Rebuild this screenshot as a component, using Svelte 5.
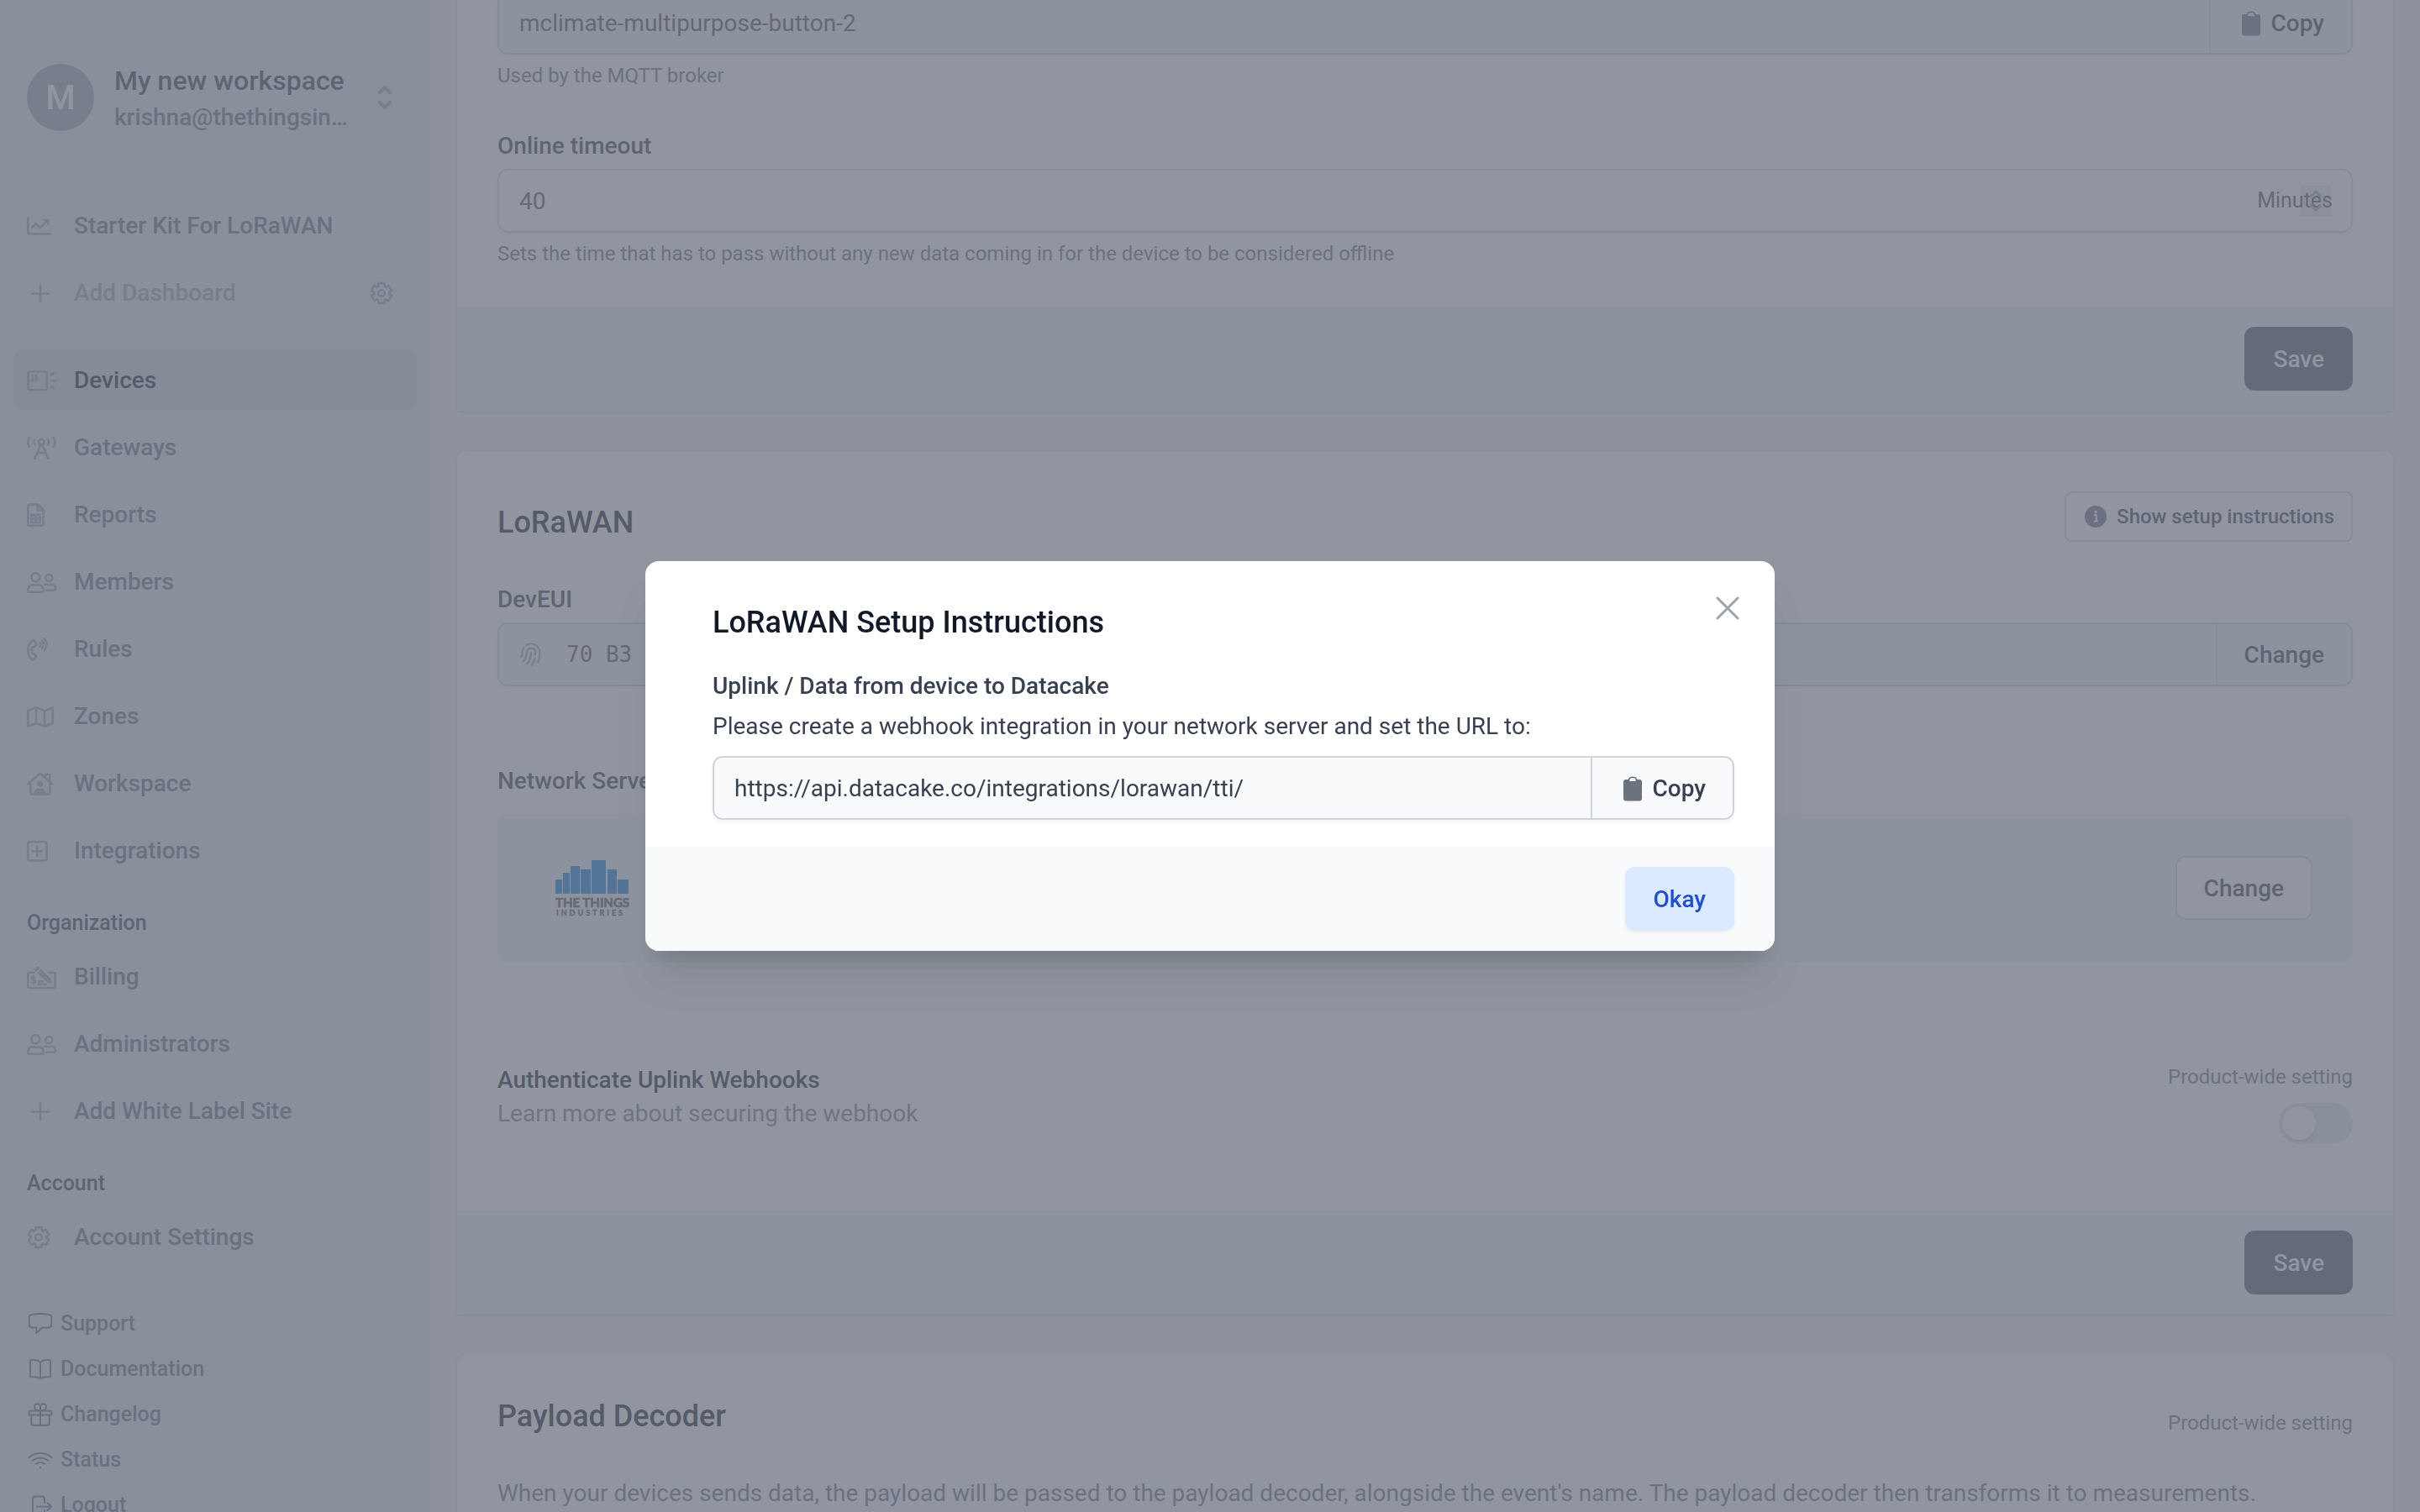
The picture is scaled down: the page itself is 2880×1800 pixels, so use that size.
<script>
  // Six-toothed gear outline around (14, 14)
  const gear = Array.from({ length: 6 }, (_, k) => {
    const at = (r, deg) => {
      const a = ((deg + 60 * k - 90) * Math.PI) / 180;
      return `${(14 + r * Math.cos(a)).toFixed(2)} ${(14 + r * Math.sin(a)).toFixed(2)}`;
    };
    return [at(9.2, -24), at(12.4, -17), at(12.4, 17), at(9.2, 24)].join(' L');
  }).join(' L');
  const gearPath = `M${gear}Z`;

  const people =
    'M15.3 8.3a5 5 0 1 1-10 0a5 5 0 1 1 10 0z M1.3 24.4v-1.2c0-3.8 2.6-6 6-6c1.5 0 1.8.6 3.1.6s1.6-.6 3.1-.6c3.4 0 6 2.2 6 6v1.2c0 .8-.5 1.3-1.3 1.3H2.6c-.8 0-1.3-.5-1.3-1.3z M30.3 9a4 4 0 1 1-8 0a4 4 0 1 1 8 0z M21.5 16.8h1.5c1.3 0 1.8.5 3.2.5s2-.5 3.5-.5c2.5 0 4.3 1.6 4.3 4.4v.7a1.8 1.8 0 0 1-1.8 1.8H23';

  const sections = [
    {
      items: [
        {
          label: 'Starter Kit For LoRaWAN',
          stroke: 'M1.2 4.5V21.5a2 2 0 0 0 2 2H28 M6.3 15.8l4.2-4.6 5.2 5.2 7.8-8',
          fill: 'M18.5 5.5h7.7v7.9z'
        },
        { label: 'Add Dashboard', muted: true, settings: true, stroke: 'M16 4.5v20 M6 14.5h20' }
      ]
    },
    {
      items: [
        {
          label: 'Devices',
          active: true,
          stroke:
            'M4 3.2h17.3a2.4 2.4 0 0 1 2.4 2.4v17.3a2.4 2.4 0 0 1-2.4 2.4H4a2.4 2.4 0 0 1-2.4-2.4V5.6A2.4 2.4 0 0 1 4 3.2z M6.7 8v7 M11 8v7 M29.5 14.3h4.3 M29 7.2l3-1.8 M29 21.4l3 1.8'
        },
        {
          label: 'Gateways',
          stroke:
            'M20.6 7.3a3.3 3.3 0 1 1-6.6 0a3.3 3.3 0 1 1 6.6 0z M16.3 10.5L9.2 27 M18.3 10.5L25.4 27 M12.6 20h9.4 M3 1.8c-2.2 3.4-2.2 7.8 0 11.2 M31.6 1.8c2.2 3.4 2.2 7.8 0 11.2 M9.3 4.5c-1 1.8-1 4 0 5.8 M25.3 4.5c1 1.8 1 4 0 5.8'
        },
        {
          label: 'Reports',
          stroke:
            'M13.5 1.6H3.6a2.3 2.3 0 0 0-2.3 2.3v20.6a2.3 2.3 0 0 0 2.3 2.3h13.8a2.3 2.3 0 0 0 2.3-2.3V8z M12.8 2v6.8h6.6 M5.3 14h10.4v9H5.3z M10.5 14v9 M5.3 18.5h10.4'
        },
        { label: 'Members', stroke: people },
        {
          label: 'Rules',
          stroke:
            'M6.5 3.7C2.5 7 1.2 11 1.2 15.3s1.3 8.3 5.3 11c.8.5 1.6.3 2-.1l2.500-3.300c.3-.5.2-1-.2-1.400l-2.500-2.200-1.800.3c-1-3-1-6 0-8.600l1.800.4 2.500-2.200c.4-.4.5-1 .2-1.500L9 3.700c-.6-.6-1.800-.6-2.500 0z M15.500 6c.9 1.400.9 3.200 0 4.600 M18 3.400c2.200 3.100 2.200 6.700 0 9.800 M20.800 1.200c3.600 4.600 3.600 9.600 0 14.200'
        },
        {
          label: 'Zones',
          stroke:
            'M1.2 7L11 3.3 21 7.2 30.8 3.3V21.8L21 25.7 11 22 1.2 25.7z M11 3.3V22 M21 7.2V25.7'
        },
        {
          label: 'Workspace',
          stroke:
            'M1.2 14.5L15.7 1.8 30.2 14.5 M4.3 12.5V24.7a1.8 1.8 0 0 0 1.8 1.8H25.4a1.8 1.8 0 0 0 1.8-1.8V3H22v4',
          fill: 'M19.3 14a3.6 3.6 0 1 1-7.2 0a3.6 3.6 0 1 1 7.2 0z M8.6 26c0-4 2.4-6.4 5.4-6.4h3.4c3 0 5.4 2.4 5.4 6.4z'
        },
        {
          label: 'Integrations',
          stroke:
            'M3.6 3.2h17.5a2.4 2.4 0 0 1 2.4 2.4v17.5a2.4 2.4 0 0 1-2.4 2.4H3.6a2.4 2.4 0 0 1-2.4-2.4V5.6a2.4 2.4 0 0 1 2.4-2.4z M12.3 8.5v11.6 M6.5 14.3h11.6'
        }
      ]
    },
    {
      title: 'Organization',
      items: [
        {
          label: 'Billing',
          stroke:
            'M8.5 8.7H2.7a1.4 1.4 0 0 0-1.4 1.4v15.5a1.4 1.4 0 0 0 1.4 1.4h29.6a1.4 1.4 0 0 0 1.4-1.4V10.1a1.4 1.4 0 0 0-1.4-1.4H26 M14 19.5h5 M14 22.8h8.5',
          thin: 'M10.3 14.8c-.6-.7-1.5-1-2.4-1c-1.4 0-2.5.7-2.5 1.9c0 2.7 5.2 1.3 5.2 4c0 1.3-1.2 2-2.7 2c-1 0-2-.4-2.7-1.2 M7.9 12v11.6',
          fill: 'M9.2 4.4l2.6-2.6c.7-.7 1.6-.7 2.2 0l1.4 1.4-4.6 4.6-1.4-1.4c-.7-.6-.8-1.4-.2-2z M12.2 9.2l4.6-4.6L28.6 16.4c.8.8 1.2 3.4 1 4.8c-1.4.2-4.4 0-5.4-1z'
        },
        { label: 'Administrators', stroke: people },
        { label: 'Add White Label Site', stroke: 'M16 4.5v20 M6 14.5h20' }
      ]
    },
    { title: 'Account', items: [{ label: 'Account Settings', stroke: gearPath + ' M17.8 14a3.8 3.8 0 1 1-7.6 0a3.8 3.8 0 1 1 7.6 0z' }] }
  ];

  const links = [
    {
      label: 'Support',
      d: 'M4.8 3.2C11.5 1.9 20.5 1.9 27.2 3.2c1.2.3 2 1.2 2 2.4v10.2c0 1.3-.9 2.3-2.2 2.4c-3 .4-6 .5-9 .6l-6.8 6.2v-6.4l-6.2-.4c-1.3-.1-2.2-1.1-2.2-2.4V5.6c0-1.2.8-2.1 2-2.4z'
    },
    {
      label: 'Documentation',
      d: 'M16 5.8C12.5 3 8 2.3 4 3.3V23.3c4-.8 8.5-.4 12 1.9c3.5-2.3 8-2.7 12-1.9V3.3c-4-1-8.5-.3-12 2.5z M16 5.8V25'
    },
    {
      label: 'Changelog',
      d: 'M4 9.5h24a1.5 1.5 0 0 1 1.5 1.5v2a1.5 1.5 0 0 1-1.5 1.5H4a1.5 1.5 0 0 1-1.5-1.5v-2A1.5 1.5 0 0 1 4 9.5z M5.3 14.5v10.5a1.7 1.7 0 0 0 1.7 1.7h18a1.7 1.7 0 0 0 1.7-1.7V14.5 M16 5v21.7 M14 9c-3 0-5-1.7-5-4.2S10.5 1.3 12.3 1.3S16 2.8 16 5.5c0-2.7 1.9-4.2 3.7-4.2S23 2.3 23 4.8S21 9 18 9'
    },
    {
      label: 'Status',
      d: 'M2.5 11.2c8-7 19-7 27 0 M6.5 15c5.8-4.8 13.2-4.8 19 0 M10.6 19c3.3-2.5 7.5-2.5 10.8 0 M15.7 23h.6v.6h-.6z'
    },
    {
      label: 'Logout',
      d: 'M21 11V6a2.5 2.5 0 0 0-2.5-2.5h-9A2.5 2.5 0 0 0 7 6v18a2.5 2.5 0 0 0 2.5 2.5h9A2.5 2.5 0 0 0 21 24v-4 M12 15.5h17 M24.5 11l4.7 4.5-4.7 4.5'
    }
  ];

  const bars = [
    { x: 0, w: 8, h: 17 },
    { x: 9, w: 8, h: 25 },
    { x: 18, w: 11, h: 33 },
    { x: 30, w: 12, h: 29 },
    { x: 43, w: 17, h: 40 },
    { x: 62, w: 11, h: 29 },
    { x: 74, w: 13, h: 17 }
  ];

  let open = $state(true);
  let timeout = $state(40);
  let secured = $state(false);
</script>

{#snippet clipboard()}
  <svg class="clip" viewBox="0 0 32 32" aria-hidden="true">
    <path
      fill-rule="evenodd"
      d="M8 5h2.6a5.5 4.2 0 0 1 10.8 0H24a3 3 0 0 1 3 3v19.5a3 3 0 0 1-3 3H8a3 3 0 0 1-3-3V8a3 3 0 0 1 3-3z M12.4 7h7.2V5.6a3.6 2.6 0 0 0-7.2 0z"
    />
  </svg>
{/snippet}

<div class="page">
  <aside class="sidebar">
    <button class="workspace" type="button">
      <span class="avatar">M</span>
      <span class="who">
        <span class="name">My new workspace</span>
        <span class="email">krishna@thethingsin…</span>
      </span>
      <svg class="updown" viewBox="0 0 16 28" aria-hidden="true"><path d="M2 8l6-6 6 6 M2 20l6 6 6-6" /></svg>
    </button>

    <nav>
      {#each sections as section}
        {#if section.title}<h2>{section.title}</h2>{/if}
        <ul class:first={!section.title}>
          {#each section.items as item}
            <li class:active={item.active} class:muted={item.muted}>
              <a href="#{item.label}">
                <svg class="icon" viewBox="0 0 36 28" aria-hidden="true">
                  <path class="line" d={item.stroke} />
                  {#if item.thin}<path class="line thin" d={item.thin} />{/if}
                  {#if item.fill}<path class="solid" d={item.fill} />{/if}
                </svg>
                {item.label}
              </a>
              {#if item.settings}
                <button class="gear" type="button" aria-label="Dashboard settings">
                  <svg viewBox="0 0 28 28" aria-hidden="true"><path d={gearPath} /><circle cx="14" cy="14" r="3.8" /></svg>
                </button>
              {/if}
            </li>
          {/each}
        </ul>
      {/each}
    </nav>

    <ul class="links">
      {#each links as link}
        <li>
          <a href="#{link.label}">
            <svg viewBox="0 0 32 28" aria-hidden="true"><path d={link.d} /></svg>
            {link.label}
          </a>
        </li>
      {/each}
    </ul>
  </aside>

  <main>
    <section class="card">
      <div class="body cut">
        <div class="field shaded">
          <input aria-label="MQTT name" readonly value="mclimate-multipurpose-button-2" />
          <button class="addon" type="button">{@render clipboard()}Copy</button>
        </div>
        <p class="help">Used by the MQTT broker</p>
        <label class="label spaced" for="timeout">Online timeout</label>
        <div class="field">
          <input id="timeout" type="number" bind:value={timeout} />
          <span class="unit">
            Minutes
            <svg class="spin" viewBox="0 0 36 36" aria-hidden="true"><path d="M12 13l6-6 6 6 M12 23l6 6 6-6" /></svg>
          </span>
        </div>
        <p class="help">Sets the time that has to pass without any new data coming in for the device to be considered offline</p>
      </div>
      <footer><button class="save" type="button">Save</button></footer>
    </section>

    <section class="card">
      <div class="body tall">
        <header>
          <h1>LoRaWAN</h1>
          <button class="info" type="button" onclick={() => (open = true)}>
            <svg viewBox="0 0 26 26" aria-hidden="true">
              <circle cx="13" cy="13" r="13" />
              <path d="M11 11h2.8v7 M10.8 18.5h5.2" />
              <circle class="dot" cx="13" cy="7.3" r="1.7" />
            </svg>
            Show setup instructions
          </button>
        </header>
        <label class="label spaced" for="eui">DevEUI</label>
        <div class="field shaded">
          <svg class="finger" viewBox="2 2 20 20" aria-hidden="true">
            <path d="M7.864 4.243A7.5 7.5 0 0119.5 10.5c0 2.92-.556 5.709-1.568 8.268M5.742 6.364A7.465 7.465 0 004.5 10.5a7.464 7.464 0 01-1.15 3.993m1.989 3.559A11.209 11.209 0 008.25 10.5a3.75 3.75 0 117.5 0c0 .527-.021 1.049-.064 1.565M12 10.5a14.94 14.94 0 01-3.6 9.75m6.633-4.596a18.666 18.666 0 01-2.485 5.33" />
          </svg>
          <input id="eui" class="mono" readonly value="70 B3" />
          <button class="addon" type="button">Change</button>
        </div>
        <h3 class="label network">Network Server</h3>
        <div class="server">
          <svg class="logo" viewBox="0 0 88 66" role="img" aria-label="The Things Industries">
            {#each bars as bar}
              <rect x={bar.x} y={40 - bar.h} width={bar.w} height={bar.h} rx="1" />
            {/each}
            <text class="things" x="0" y="56">THE THINGS</text>
            <text class="industries" x="1" y="66">INDUSTRIES</text>
          </svg>
          <button class="plain" type="button">Change</button>
        </div>
        <div class="auth">
          <div>
            <h3 class="strong">Authenticate Uplink Webhooks</h3>
            <a class="learn" href="#learn">Learn more about securing the webhook</a>
          </div>
          <div class="toggle">
            <label class="note" for="secure">Product-wide setting</label>
            <input id="secure" type="checkbox" role="switch" bind:checked={secured} />
          </div>
        </div>
      </div>
      <footer><button class="save" type="button">Save</button></footer>
    </section>

    <section class="card">
      <div class="body">
        <header>
          <h1>Payload Decoder</h1>
          <span class="note">Product-wide setting</span>
        </header>
        <p class="about">When your devices sends data, the payload will be passed to the payload decoder, alongside the event's name. The payload decoder then transforms it to measurements.</p>
      </div>
    </section>
  </main>
</div>

{#if open}
  <div class="overlay">
    <div class="modal" role="dialog" aria-modal="true" aria-labelledby="modal-title">
      <button class="close" type="button" aria-label="Close" onclick={() => (open = false)}>
        <svg viewBox="0 0 48 48" aria-hidden="true"><path d="M12 12l24 24 M36 12L12 36" /></svg>
      </button>
      <div class="modal-body">
        <h2 id="modal-title">LoRaWAN Setup Instructions</h2>
        <h3>Uplink / Data from device to Datacake</h3>
        <label for="hook">Please create a webhook integration in your network server and set the URL to:</label>
        <div class="field shaded">
          <input id="hook" readonly value="https://api.datacake.co/integrations/lorawan/tti/" />
          <button class="addon" type="button">{@render clipboard()}Copy</button>
        </div>
      </div>
      <footer><button class="okay" type="button" onclick={() => (open = false)}>Okay</button></footer>
    </div>
  </div>
{/if}

<style>
  :global(body) {
    margin: 0;
    background: #f3f4f6;
    overflow: hidden;
  }
  .page,
  .overlay {
    font-family: Roboto, 'Liberation Sans', sans-serif;
    font-size: 28px;
    line-height: 38px;
    color: #374151;
  }
  .page *,
  .overlay * {
    box-sizing: border-box;
  }
  .page {
    display: flex;
    height: 100vh;
    overflow: hidden;
    background: #f3f4f6;
  }
  button,
  input {
    font: inherit;
    color: inherit;
    margin: 0;
  }
  button {
    border: 0;
    background: none;
    padding: 0;
    font-weight: 500;
    white-space: nowrap;
  }
  h1,
  h2,
  h3,
  p,
  ul {
    margin: 0;
    padding: 0;
    font-weight: inherit;
    font-size: inherit;
  }
  ul {
    list-style: none;
  }
  a {
    color: inherit;
    text-decoration: none;
  }

  /* Sidebar */
  .sidebar {
    flex: 0 0 512px;
    padding: 76px 16px 0;
    background: #e2e6eb;
    font-weight: 500;
  }
  .workspace {
    display: flex;
    align-items: center;
    width: 100%;
    height: 80px;
    padding: 0 30px 0 16px;
    text-align: left;
  }
  .avatar {
    width: 80px;
    height: 80px;
    padding-top: 2px;
    border-radius: 50%;
    background: #9ca3af;
    color: #fff;
    font-size: 40px;
    line-height: 78px;
    text-align: center;
  }
  .who {
    display: flex;
    flex-direction: column;
    flex: 1;
    margin-left: 24px;
    padding-top: 4px;
  }
  .name {
    font-size: 32px;
    line-height: 44px;
  }
  .email {
    line-height: 44px;
    color: #6b7280;
  }
  .updown {
    width: 16px;
    height: 28px;
    fill: none;
    stroke: #9ca3af;
    stroke-width: 4;
    stroke-linecap: round;
    stroke-linejoin: round;
  }
  nav {
    margin-top: 76px;
  }
  nav ul {
    display: flex;
    flex-direction: column;
    gap: 8px;
  }
  nav ul.first + ul.first {
    margin-top: 32px;
  }
  nav h2 {
    padding: 32px 16px 8px;
    font-size: 25px;
    line-height: 38px;
  }
  nav li {
    display: flex;
    align-items: center;
    justify-content: space-between;
    height: 72px;
    padding: 2px 28px 0 16px;
    border-radius: 12px;
    color: #6b7280;
  }
  nav a {
    display: flex;
    align-items: center;
    gap: 20px;
  }
  nav li.active {
    background: #d1d5db;
    color: #111827;
  }
  nav li.muted {
    color: #9ca3af;
  }
  .icon {
    width: 36px;
    height: 28px;
    overflow: visible;
  }
  .line,
  .gear path,
  .gear circle {
    fill: none;
    stroke: #9ca3af;
    stroke-width: 2.6;
    stroke-linecap: round;
    stroke-linejoin: round;
  }
  .line.thin {
    stroke-width: 1.8;
  }
  .solid {
    fill: #9ca3af;
  }
  .gear,
  .gear svg {
    display: block;
    width: 28px;
    height: 28px;
    overflow: visible;
  }
  .links {
    margin-top: 40px;
    padding: 0 16px;
    font-size: 25px;
    color: #6b7280;
  }
  .links a {
    display: flex;
    align-items: center;
    gap: 8px;
    height: 54px;
    padding-top: 2px;
  }
  .links svg {
    width: 32px;
    height: 28px;
    fill: none;
    stroke: #6b7280;
    stroke-width: 2;
    stroke-linecap: round;
    stroke-linejoin: round;
  }

  /* Cards; the first one is scrolled partly out of view */
  main {
    display: flex;
    flex-direction: column;
    flex: 1;
    gap: 48px;
    min-width: 0;
    padding: 0 32px;
    margin-top: -11px;
  }
  .card {
    flex-shrink: 0;
    border-radius: 12px 12px 4px 4px;
    background: #fff;
    box-shadow: 0 2px 4px rgba(0, 0, 0, 0.12), 0 0 4px rgba(0, 0, 0, 0.06);
  }
  .body {
    padding: 48px;
  }
  .body.cut {
    padding-top: 0;
  }
  .body.tall {
    padding-bottom: 80px;
  }
  footer {
    display: flex;
    justify-content: flex-end;
    padding: 24px 48px;
    background: #f0f8f7;
  }
  .card footer {
    border-radius: 0 0 4px 4px;
  }
  header {
    display: flex;
    align-items: flex-end;
    justify-content: space-between;
  }
  h1 {
    padding-top: 2px;
    font-size: 36px;
    line-height: 46px;
    font-weight: 500;
    color: #111827;
  }
  .label {
    display: block;
    margin-bottom: 8px;
    padding-top: 2px;
    font-weight: 500;
  }
  .spaced {
    margin-top: 48px;
  }
  .label.network {
    margin: 92px 0 20px;
  }
  .help,
  .note {
    padding-top: 2px;
    font-size: 24px;
    line-height: 30px;
    color: #6b7280;
  }
  .help {
    margin-top: 8px;
  }
  .field {
    display: flex;
    align-items: center;
    height: 76px;
    border: 2px solid #d1d5db;
    border-radius: 12px;
    background: #fff;
    box-shadow: 0 2px 4px rgba(0, 0, 0, 0.05);
  }
  .field.shaded {
    background: #f0f8f7;
  }
  .field input {
    flex: 1;
    min-width: 0;
    height: 72px;
    padding: 0 24px;
    border: 0;
    background: none;
    color: #525252;
    outline: none;
    appearance: textfield;
  }
  .field input.mono {
    padding-left: 28px;
    font-family: 'DejaVu Sans Mono', monospace;
    font-size: 26px;
  }
  .addon {
    display: flex;
    align-items: center;
    gap: 8px;
    height: 72px;
    padding: 2px 32px 0;
    border-left: 2px solid #d1d5db;
  }
  .clip {
    width: 32px;
    height: 32px;
    fill: #6b7280;
  }
  .unit {
    position: relative;
    padding-right: 22px;
    font-size: 25px;
    color: #525252;
  }
  .spin {
    position: absolute;
    top: 1px;
    right: 24px;
    width: 36px;
    height: 36px;
    background: rgba(107, 114, 128, 0.15);
    fill: none;
    stroke: #9ca3af;
    stroke-width: 3;
  }
  .finger {
    width: 28px;
    height: 28px;
    margin-left: 24px;
    fill: none;
    stroke: #9ca3af;
    stroke-width: 1.5;
    stroke-linecap: round;
  }
  .save,
  .plain,
  .okay {
    height: 76px;
    padding: 2px 32px 0;
    border: 2px solid transparent;
    border-radius: 12px;
    box-shadow: 0 2px 4px rgba(0, 0, 0, 0.06);
  }
  .save {
    border-color: #4b5563;
    background: #4b5563;
    color: #fff;
  }
  .plain,
  .info {
    border: 2px solid #d1d5db;
    background: #fff;
  }
  .info {
    display: flex;
    align-items: center;
    gap: 12px;
    height: 60px;
    padding: 0 20px 0 22px;
    border-radius: 8px;
    font-size: 24px;
  }
  .info svg {
    width: 26px;
    height: 26px;
    fill: #6b7280;
  }
  .info path {
    fill: none;
    stroke: #fff;
    stroke-width: 2.2;
  }
  .info .dot {
    fill: #fff;
  }
  .server {
    display: flex;
    align-items: center;
    justify-content: space-between;
    height: 176px;
    padding: 0 48px 0 69px;
    border-radius: 12px;
    background: #f0f8f7;
  }
  .logo {
    width: 88px;
    height: 66px;
    overflow: visible;
    font-family: Lato, sans-serif;
    font-weight: 700;
  }
  .logo rect {
    fill: #087ed8;
  }
  .logo text {
    fill: #555;
    stroke: #555;
  }
  .things {
    font-size: 15px;
    stroke-width: 0.7;
  }
  .industries {
    font-size: 9px;
    letter-spacing: 3px;
    stroke-width: 0.4;
  }
  .auth {
    display: flex;
    justify-content: space-between;
    margin-top: 120px;
  }
  .strong {
    padding-top: 2px;
    font-weight: 500;
    color: #111827;
  }
  .learn {
    display: block;
    padding-top: 2px;
    color: #808080;
  }
  .toggle {
    display: flex;
    flex-direction: column;
    align-items: flex-end;
    gap: 16px;
  }
  .toggle input {
    appearance: none;
    width: 88px;
    height: 48px;
    padding: 4px;
    border-radius: 24px;
    background: #e2e6eb;
  }
  .toggle input::before {
    content: '';
    display: block;
    width: 40px;
    height: 40px;
    border-radius: 50%;
    background: #fff;
    box-shadow: 0 2px 6px rgba(0, 0, 0, 0.15);
  }
  .toggle input:checked::before {
    margin-left: 40px;
  }
  .about {
    margin-top: 48px;
    padding-top: 2px;
    color: #6b7280;
  }

  /* Dialog */
  .overlay {
    position: fixed;
    inset: 0;
    display: flex;
    align-items: center;
    justify-content: center;
    background: rgba(107, 114, 128, 0.75);
  }
  .modal {
    position: relative;
    width: 1344px;
    max-width: 90%;
    border-radius: 16px;
    overflow: hidden;
    background: #fff;
    box-shadow: 0 40px 50px -10px rgba(0, 0, 0, 0.1), 0 16px 20px -12px rgba(0, 0, 0, 0.1);
  }
  .modal-body {
    padding: 48px 48px 32px 80px;
  }
  .modal h2 {
    margin-bottom: 32px;
    padding-top: 2px;
    font-size: 36px;
    line-height: 46px;
    font-weight: 500;
    color: #111827;
  }
  .modal h3 {
    margin-bottom: 8px;
    padding-top: 2px;
    font-weight: 500;
  }
  .modal label {
    display: block;
    margin-bottom: 16px;
    padding-top: 2px;
  }
  .modal .field.shaded,
  .modal footer {
    background: #f9fafc;
  }
  .modal .field input {
    color: #374151;
  }
  .close {
    position: absolute;
    top: 32px;
    right: 32px;
    width: 48px;
    height: 48px;
  }
  .close svg {
    display: block;
    fill: none;
    stroke: #9ca3af;
    stroke-width: 3;
    stroke-linecap: round;
  }
  .okay {
    background: #dbeafe;
    border-color: #dbeafe;
    color: #1d4ed8;
  }
</style>
